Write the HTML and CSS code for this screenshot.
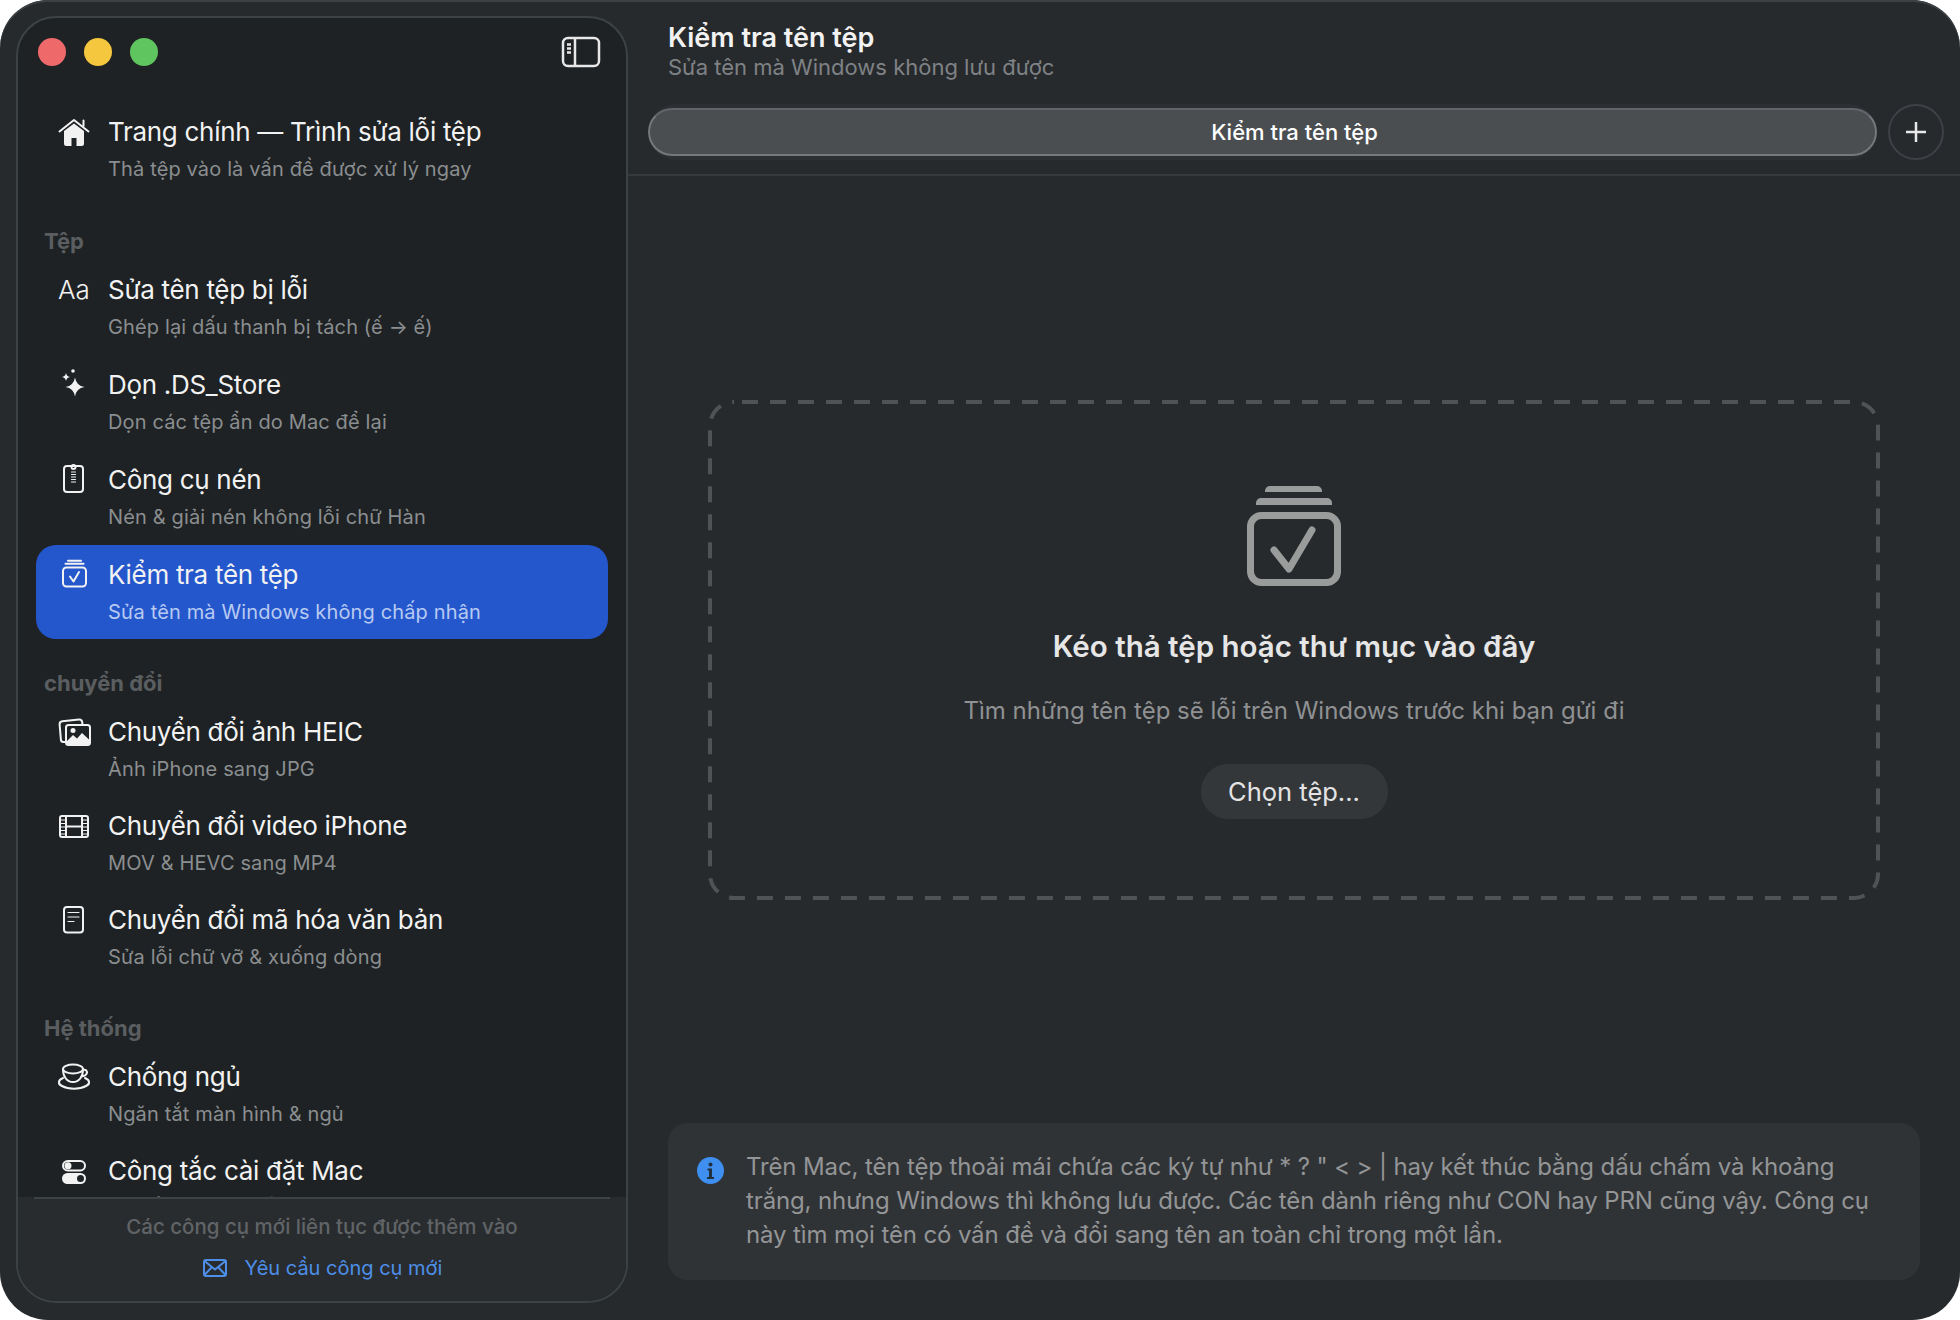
FILE: index.html
```html
<!DOCTYPE html>
<html lang="vi">
<head>
  <meta charset="UTF-8">
  <title>Kiểm tra tên tệp</title>
  <link rel="stylesheet" href="styles.css">
</head>
<body>
  <div class="window">

    <!-- sidebar -->
    <aside class="sidebar">
      <div class="titlebar">
        <div class="lights">
          <span class="light red"></span>
          <span class="light yellow"></span>
          <span class="light green"></span>
        </div>
        <svg class="toggle-icon" width="40" height="32" viewBox="0 0 40 32">
          <rect x="2" y="2" width="36" height="28" rx="5"/>
          <path d="M14 2v28M6 8.500h4M6 12.500h4M6 16.500h4"/>
        </svg>
      </div>

      <div class="tool-list">
        <a class="tool">
          <svg class="icon" viewBox="0 0 34 34">
            <path d="M2.500 16.500 17 5l14.500 11.500M26.500 5.500v5.500"/>
            <path class="solid" fill-rule="evenodd" d="M7 16 17 8.500 27 16v12.500a2.500 2.500 0 0 1-2.500 2.500h-15A2.500 2.500 0 0 1 7 28.500Zm7.500 7v8h5v-8Z"/>
          </svg>
          <div class="tool-text">
            <div class="tool-name">Trang chính — Trình sửa lỗi tệp</div>
            <div class="tool-desc">Thả tệp vào là vấn đề được xử lý ngay</div>
          </div>
        </a>

        <section class="group tight">
          <h4 class="group-label">Tệp</h4>
          <a class="tool">
            <span class="icon-text">Aa</span>
            <div class="tool-text">
              <div class="tool-name">Sửa tên tệp bị lỗi</div>
              <div class="tool-desc">Ghép lại dấu thanh bị tách (ế → ế)</div>
            </div>
          </a>
          <a class="tool">
            <svg class="icon" viewBox="0 0 34 34">
              <path class="solid" d="M18 9.500Q19.300 17.700 27.500 19 19.300 20.300 18 28.500 16.700 20.300 8.500 19 16.700 17.700 18 9.500Z"/>
              <path class="solid" d="M9 5Q9.600 8.400 13 9 9.600 9.600 9 13 8.400 9.600 5 9 8.400 8.400 9 5Z"/>
              <circle class="solid" cx="16" cy="3" r="1.800"/>
            </svg>
            <div class="tool-text">
              <div class="tool-name">Dọn .DS_Store</div>
              <div class="tool-desc">Dọn các tệp ẩn do Mac để lại</div>
            </div>
          </a>
          <a class="tool">
            <svg class="icon" viewBox="0 0 34 34">
              <rect x="7" y="3" width="19" height="26" rx="3"/>
              <circle cx="16.500" cy="4" r="2"/>
              <path class="thin" d="M14.500 9h4M14.500 11.500h4M14.500 14h4M14.500 16.500h4M14.500 19h4"/>
            </svg>
            <div class="tool-text">
              <div class="tool-name">Công cụ nén</div>
              <div class="tool-desc">Nén &amp; giải nén không lỗi chữ Hàn</div>
            </div>
          </a>
          <a class="tool selected">
            <svg class="icon" viewBox="0 0 34 34">
              <path d="M11 2.700h13M8.500 5.800h18"/>
              <rect x="6" y="9.500" width="23" height="19" rx="3.500"/>
              <path d="M13 18.500l3.500 5 5.500-9.500"/>
            </svg>
            <div class="tool-text">
              <div class="tool-name">Kiểm tra tên tệp</div>
              <div class="tool-desc">Sửa tên mà Windows không chấp nhận</div>
            </div>
          </a>
        </section>

        <section class="group">
          <h4 class="group-label">chuyển đổi</h4>
          <a class="tool">
            <svg class="icon" viewBox="0 0 34 34">
              <path d="M8 27H6.500a2.500 2.500 0 0 1-2.600-2.300L2.600 9.500a3 3 0 0 1 2.700-3.200L22 4.500a3 3 0 0 1 3.200 2.700l.2 2"/>
              <rect x="9" y="10" width="24" height="20" rx="2.500"/>
              <path class="solid" d="M10 29v-3l6-6 4 3.500 5-5.500 7 6.500V29Z"/>
              <circle class="solid" cx="16" cy="15.500" r="2.500"/>
            </svg>
            <div class="tool-text">
              <div class="tool-name">Chuyển đổi ảnh HEIC</div>
              <div class="tool-desc">Ảnh iPhone sang JPG</div>
            </div>
          </a>
          <a class="tool">
            <svg class="icon" viewBox="0 0 34 34">
              <rect x="3" y="7" width="28" height="21" rx="2"/>
              <path d="M9 7v21M25 7v21M9 17.500h16"/>
              <path class="thin" d="M3 11h6M3 14.500h6M3 18h6M3 21.500h6M3 25h6M25 11h6M25 14.500h6M25 18h6M25 21.500h6M25 25h6"/>
            </svg>
            <div class="tool-text">
              <div class="tool-name">Chuyển đổi video iPhone</div>
              <div class="tool-desc">MOV &amp; HEVC sang MP4</div>
            </div>
          </a>
          <a class="tool">
            <svg class="icon" viewBox="0 0 34 34">
              <rect x="7" y="4" width="19" height="25.500" rx="3"/>
              <path class="thin" d="M11 9.500h11M11 14h11M11 18.500h6"/>
            </svg>
            <div class="tool-text">
              <div class="tool-name">Chuyển đổi mã hóa văn bản</div>
              <div class="tool-desc">Sửa lỗi chữ vỡ &amp; xuống dòng</div>
            </div>
          </a>
        </section>

        <section class="group">
          <h4 class="group-label">Hệ thống</h4>
          <a class="tool">
            <svg class="icon" viewBox="0 0 34 34">
              <ellipse cx="16" cy="9" rx="10" ry="4.500"/>
              <path d="M6 9c0 8 4 13 10 13s10-5 10-13M26 10c4-1 5.500 3 2 5.500l-3.500 1M6 18c-5 2-5.500 6-1 8 6.500 3.500 17.500 3.500 24 0 4.500-2 4-6-1-8"/>
            </svg>
            <div class="tool-text">
              <div class="tool-name">Chống ngủ</div>
              <div class="tool-desc">Ngăn tắt màn hình &amp; ngủ</div>
            </div>
          </a>
          <a class="tool">
            <svg class="icon" viewBox="0 0 34 34">
              <rect x="6" y="7" width="22" height="9.500" rx="4.750"/>
              <circle class="solid" cx="11" cy="11.800" r="3.500"/>
              <rect class="solid" x="5" y="19" width="24" height="11" rx="5.500"/>
              <circle class="knob" cx="23.500" cy="24.500" r="3.500"/>
            </svg>
            <div class="tool-text">
              <div class="tool-name">Công tắc cài đặt Mac</div>
              <div class="tool-desc">Bật tắt tùy chọn ẩn</div>
            </div>
          </a>
        </section>
      </div>

      <footer class="side-footer">
        <p class="footer-note">Các công cụ mới liên tục được thêm vào</p>
        <a class="footer-link">
          <svg width="26" height="20" viewBox="0 0 26 20">
            <rect x="2" y="2" width="22" height="16" rx="2"/>
            <path d="M2.500 3 13 11.500 23.500 3M2.500 17 10 9M23.500 17 16 9"/>
          </svg>
          Yêu cầu công cụ mới
        </a>
      </footer>
    </aside>

    <!-- main -->
    <main class="main">
      <header class="main-head">
        <h1 class="main-title">Kiểm tra tên tệp</h1>
        <p class="main-sub">Sửa tên mà Windows không lưu được</p>
      </header>

      <div class="tabbar">
        <div class="tab-track">
          <div class="tab">Kiểm tra tên tệp</div>
        </div>
        <button class="tab-add">
          <svg width="24" height="24" viewBox="0 0 24 24"><path d="M12 2v20M2 12h20"/></svg>
        </button>
      </div>

      <div class="content">
        <div class="dropzone">
          <svg class="drop-border" width="1172" height="500" viewBox="0 0 1172 500">
            <rect x="2" y="2" width="1168" height="496" rx="24"/>
          </svg>
          <svg class="drop-icon" width="94" height="100" viewBox="0 0 94 100">
            <path class="bars" d="M18 6V5a5 5 0 0 1 5-5h47a5 5 0 0 1 5 5v1ZM9 19v-2a5 5 0 0 1 5-5h66a5 5 0 0 1 5 5v2Z"/>
            <rect x="3.500" y="29.500" width="87" height="67" rx="11"/>
            <path d="M27 64l15 19 23-39"/>
          </svg>
          <h2 class="drop-title">Kéo thả tệp hoặc thư mục vào đây</h2>
          <p class="drop-sub">Tìm những tên tệp sẽ lỗi trên Windows trước khi bạn gửi đi</p>
          <button class="pick-btn">Chọn tệp...</button>
        </div>

        <div class="note">
          <svg class="note-icon" width="27" height="27" viewBox="0 0 27 27">
            <circle cx="13.500" cy="13.500" r="13.500"/>
            <circle class="i" cx="13.500" cy="7.500" r="2"/>
            <path class="i" d="M10.500 11.500h4.500v8.500h2v2h-7v-2h2v-6.500h-1.500Z"/>
          </svg>
          <p class="note-text">Trên Mac, tên tệp thoải mái chứa các ký tự như * ? " &lt; &gt; | hay kết thúc bằng dấu chấm và khoảng trắng, nhưng Windows thì không lưu được. Các tên dành riêng như CON hay PRN cũng vậy. Công cụ này tìm mọi tên có vấn đề và đổi sang tên an toàn chỉ trong một lần.</p>
        </div>
      </div>
    </main>
  </div>
</body>
</html>
```

FILE: styles.css
```css
:root {
  --side-bg: #1e2224;
  --main-bg: #272a2d;
  --line: #3d4245;
  --text: #f2f2f2;
  --muted: #8b8e90;
  --blue: #2557cc;
  --link: #4d8fe8;
}

* {
  box-sizing: border-box;
  margin: 0;
  padding: 0;
}

body {
  background: #fff;
  font-family: Inter, "Noto Sans", sans-serif;
  color: var(--text);
}

.window {
  width: 1960px;
  height: 1320px;
  display: flex;
  padding: 16px 0 17px 16px;
  background: var(--main-bg);
  border-radius: 48px;
  box-shadow: inset 0 2px 0 #3d4144;
  overflow: hidden;
}

/* sidebar */
.sidebar {
  width: 612px;
  flex-shrink: 0;
  display: flex;
  flex-direction: column;
  background: var(--side-bg);
  border: 2px solid var(--line);
  border-radius: 40px;
  overflow: hidden;
}

.titlebar {
  height: 84px;
  flex-shrink: 0;
  display: flex;
  justify-content: space-between;
  padding: 20px 25px 0 20px;
}

.lights {
  display: flex;
  gap: 18px;
}

.light {
  width: 28px;
  height: 28px;
  border-radius: 50%;
}

.red { background: #ee6a6a; }
.yellow { background: #f5c73f; }
.green { background: #5ec55f; }

.toggle-icon {
  margin-top: -2px;
  fill: none;
  stroke: #e8e8e8;
  stroke-width: 2.500;
}

.tool-list {
  flex: 1;
  min-height: 0;
  overflow: hidden;
  padding: 0 18px;
}

.tool {
  display: flex;
  gap: 17px;
  height: 94px;
  padding: 13px 0 0 21px;
  border-radius: 20px;
}

.tool.selected {
  background: var(--blue);
}

.icon {
  width: 34px;
  height: 34px;
  flex-shrink: 0;
  fill: none;
  stroke: #f2f2f2;
  stroke-width: 2;
  stroke-linecap: round;
  stroke-linejoin: round;
}

.icon .solid {
  fill: #f2f2f2;
  stroke: none;
}

.icon .thin {
  stroke-width: 1.200;
}

.icon .knob {
  fill: var(--side-bg);
  stroke: none;
}

.icon-text {
  width: 34px;
  flex-shrink: 0;
  font-size: 26px;
  font-weight: 300;
  line-height: 34px;
  text-align: center;
  white-space: nowrap;
}

.tool-name {
  font-size: 26px;
  letter-spacing: -0.3px;
  line-height: 34px;
  white-space: nowrap;
}

.tool-desc {
  margin-top: 7px;
  font-size: 20px;
  letter-spacing: 0.14px;
  line-height: 26px;
  color: var(--muted);
  white-space: nowrap;
}

.selected .tool-desc {
  color: #b7caf2;
}

.group {
  margin-top: 25px;
}

.group.tight {
  margin-top: 26px;
}

.tight .tool:not(.selected) {
  height: 95px;
}

.group-label {
  padding-left: 8px;
  font-size: 22px;
  font-weight: 700;
  line-height: 38px;
  color: #5b5e60;
}

.side-footer {
  height: 104px;
  flex-shrink: 0;
  position: relative;
  display: flex;
  flex-direction: column;
  align-items: center;
  background: #292c2f;
  padding-top: 16px;
}

.side-footer::before {
  content: "";
  position: absolute;
  top: 0;
  left: 16px;
  right: 16px;
  height: 2px;
  background: var(--line);
}

.footer-note {
  font-size: 20.500px;
  font-weight: 500;
  line-height: 28px;
  color: #606467;
}

.footer-link {
  display: flex;
  align-items: center;
  gap: 17px;
  margin-top: 13px;
  font-size: 20px;
  line-height: 28px;
  color: var(--link);
}

.footer-link svg {
  fill: none;
  stroke: var(--link);
  stroke-width: 2;
}

/* main */
.main {
  flex: 1;
  min-width: 0;
  display: flex;
  flex-direction: column;
  margin-top: -16px;
  margin-bottom: -17px;
}

.main-head {
  height: 104px;
  padding: 21px 0 0 40px;
}

.main-title {
  font-size: 27px;
  font-weight: 600;
  line-height: 34px;
}

.main-sub {
  font-size: 22px;
  line-height: 28px;
  margin-top: -2px;
  color: #7f8285;
}

.tabbar {
  height: 72px;
  flex-shrink: 0;
  display: flex;
  gap: 11px;
  padding: 0 16px 0 20px;
  border-bottom: 2px solid #35393c;
}

.tab-track {
  flex: 1;
  height: 56px;
  padding: 4px 0;
  background: #2c3033;
  border-radius: 28px;
}

.tab {
  height: 48px;
  padding-left: 64px;
  background: #4a4e51;
  border: 2px solid #74787b;
  border-top-color: #62666a;
  border-radius: 24px;
  font-size: 22px;
  font-weight: 500;
  line-height: 44px;
  text-align: center;
  color: #fff;
}

.tab-add {
  width: 56px;
  height: 56px;
  display: flex;
  align-items: center;
  justify-content: center;
  background: none;
  border: 2px solid #3e4246;
  border-radius: 50%;
}

.tab-add svg {
  fill: none;
  stroke: #e8e8e8;
  stroke-width: 2.500;
}

.content {
  flex: 1;
  min-height: 0;
  display: flex;
  flex-direction: column;
  align-items: center;
  padding: 224px 40px 40px;
}

.dropzone {
  position: relative;
  width: 1172px;
  height: 500px;
  display: flex;
  flex-direction: column;
  align-items: center;
  padding-top: 86px;
}

.drop-border {
  position: absolute;
  top: 0;
  left: 0;
  fill: none;
  stroke: #505356;
  stroke-width: 4;
  stroke-dasharray: 16 12;
  stroke-dashoffset: 20;
}

.drop-icon {
  flex-shrink: 0;
  fill: none;
  stroke: #9a9b9b;
  stroke-width: 7;
  stroke-linecap: round;
  stroke-linejoin: round;
}

.drop-icon .bars {
  fill: #9a9b9b;
  stroke: none;
}

.drop-title {
  margin-top: 40px;
  font-size: 29.500px;
  font-weight: 600;
  line-height: 40px;
  color: #e6e6e6;
}

.drop-sub {
  margin-top: 28px;
  font-size: 24px;
  line-height: 34px;
  color: #8f9193;
}

.pick-btn {
  width: 187px;
  height: 55px;
  margin-top: 36px;
  background: #34373a;
  border: none;
  border-radius: 27px;
  font-family: inherit;
  font-size: 25.500px;
  color: #e4e4e4;
}

.note {
  width: 100%;
  height: 157px;
  display: flex;
  gap: 22px;
  margin-top: auto;
  padding: 27px 30px 0 29px;
  background: #303336;
  border-radius: 20px;
}

.note-icon {
  flex-shrink: 0;
  margin-top: 7px;
  fill: #3f8ff0;
}

.note-icon .i {
  fill: #20303f;
}

.note-text {
  font-size: 24px;
  letter-spacing: -0.13px;
  line-height: 34px;
  color: #939596;
}
```
